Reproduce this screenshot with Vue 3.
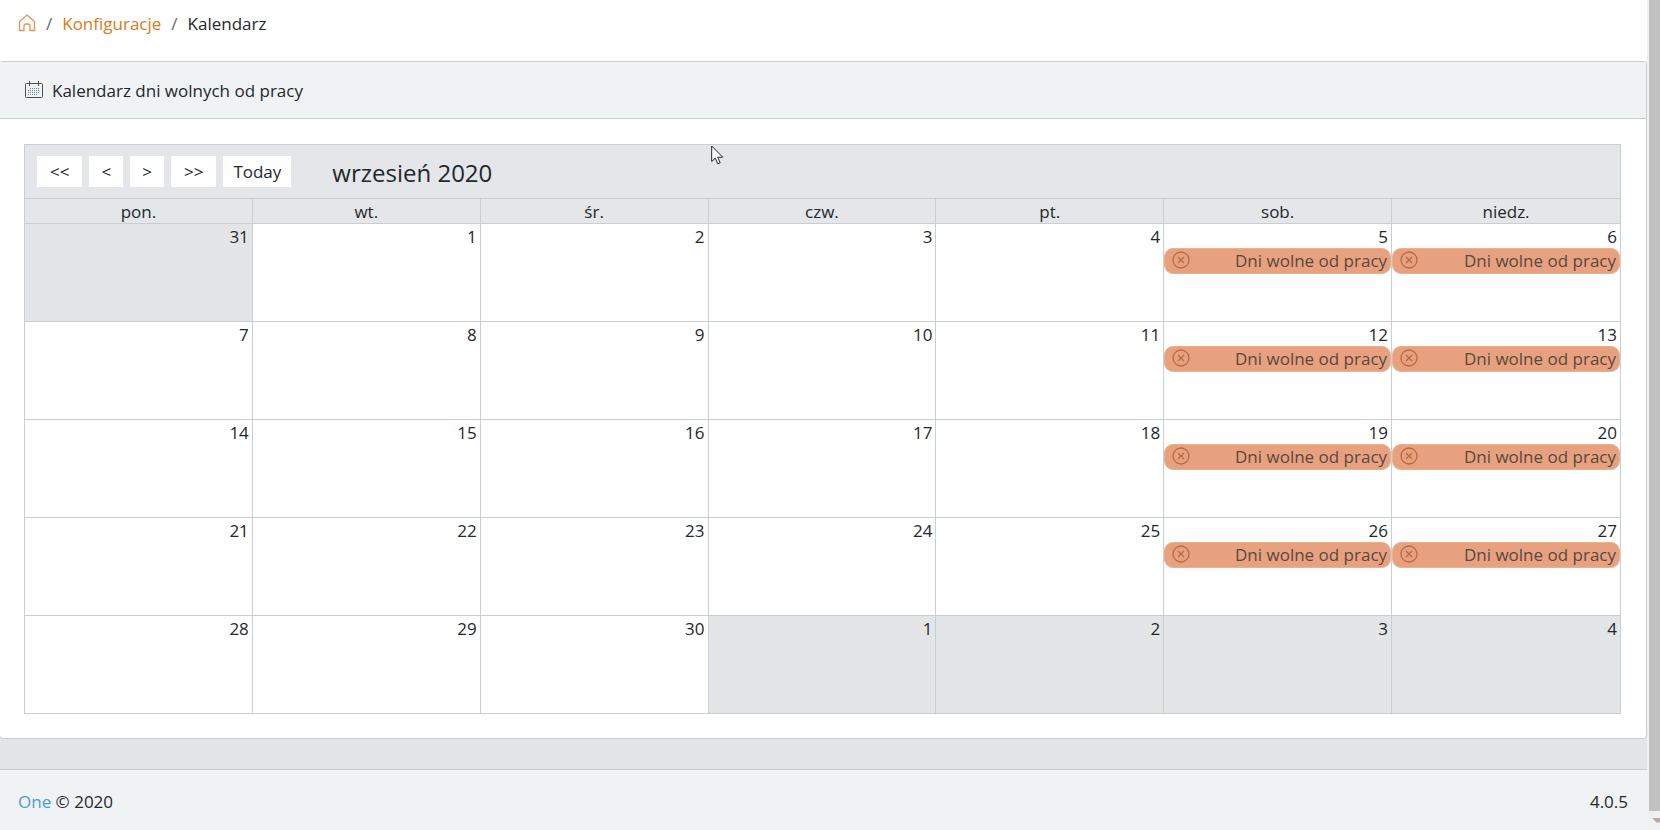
<template>
  <div class="layout">
    <div class="page">
      <nav class="breadcrumb" aria-label="breadcrumb">
        <a href="#" class="home" aria-label="Home">
          <svg viewBox="0 0 18 18" width="18" height="18">
            <path d="M1.500 7.500 9 1l7.500 6.500V16.500h-4.500V12a2 2 0 0 0-2-2H8a2 2 0 0 0-2 2v4.500H1.500z" />
          </svg>
        </a>
        <span class="separator">/</span>
        <a href="#">Konfiguracje</a>
        <span class="separator">/</span>
        <span>Kalendarz</span>
      </nav>

      <main class="card">
        <header class="card-header">
          <svg class="header-icon" viewBox="0 0 18 18" width="18" height="18">
            <path d="M1.500 2.500h15a1 1 0 0 1 1 1v12a1 1 0 0 1-1 1h-15a1 1 0 0 1-1-1v-12a1 1 0 0 1 1-1zM4.500 0v5M13.500 0v5" />
            <path class="dots" d="M5 7.500h10M3 9.500h12M3 11.500h12M3 13.500h10" />
          </svg>
          <span>Kalendarz dni wolnych od pracy</span>
        </header>

        <div class="card-body">
          <div class="calendar">
            <div class="toolbar">
              <button
                v-for="button in buttons"
                :key="button.text"
                type="button"
                :class="button.size"
              >
                {{ button.text }}
              </button>
              <h1>wrzesień 2020</h1>
            </div>
            <table>
              <thead>
                <tr>
                  <th v-for="day in weekDays" :key="day" scope="col">{{ day }}</th>
                </tr>
              </thead>
              <tbody>
                <tr v-for="(week, index) in weeks" :key="index">
                  <td v-for="day in week" :key="day.number" :class="{ outside: day.outside }">
                    <div class="day-number">{{ day.number }}</div>
                    <div v-if="day.free" class="event">
                      <button type="button" class="remove" aria-label="Usuń">
                        <svg viewBox="0 0 18 18" width="18" height="18">
                          <circle cx="9" cy="9" r="8" />
                          <path d="m6 6 6 6M12 6l-6 6" />
                        </svg>
                      </button>
                      <span>Dni wolne od pracy</span>
                    </div>
                  </td>
                </tr>
              </tbody>
            </table>
          </div>
        </div>
      </main>

      <footer class="footer">
        <span><a href="#">One</a> © 2020</span>
        <span>4.0.5</span>
      </footer>
    </div>

    <div class="scrollbar">
      <div class="thumb"></div>
      <svg class="arrow" viewBox="0 0 8 5" width="8" height="5">
        <path d="M0 0h8v4.500H4.500z" />
      </svg>
    </div>

    <svg class="cursor" viewBox="0 0 13 20" width="13" height="20">
      <path d="M.7 1v15.500l3.600-3.400 2.500 5.700 2.400-1-2.500-5.600h5z" />
    </svg>
  </div>
</template>

<script setup>
const buttons = [
  { text: '<<', size: 'wide' },
  { text: '<', size: 'narrow' },
  { text: '>', size: 'narrow' },
  { text: '>>', size: 'wide' },
  { text: 'Today', size: 'text' }
]
const weekDays = ['pon.', 'wt.', 'śr.', 'czw.', 'pt.', 'sob.', 'niedz.']

// the grid starts on monday, 31 august
const weeks = Array.from({ length: 5 }, (_, week) =>
  Array.from({ length: 7 }, (_, weekday) => {
    const date = new Date(2020, 7, 31 + week * 7 + weekday)
    const outside = date.getMonth() !== 8
    return {
      number: date.getDate(),
      outside,
      free: !outside && weekday > 4
    }
  })
)
</script>

<style>
body {
  margin: 0;
  background: #e4e5e6;
}
</style>

<style scoped>
.layout {
  position: relative;
  display: flex;
  min-height: 100vh;
  overflow: hidden;
  color: #23282c;
  font-family: "Open Sans", "Noto Sans", sans-serif;
  font-size: 17px;
  line-height: 24px;
}

.page {
  flex: 1;
  min-width: 0;
  display: flex;
  flex-direction: column;
}

.breadcrumb {
  display: flex;
  align-items: center;
  gap: 10px;
  padding: 12px 18px 25px;
  background: #fff;
}

.breadcrumb a {
  color: #db7a20;
  text-decoration: none;
}

.breadcrumb .home {
  display: flex;
  padding-bottom: 2px;
}

.home svg {
  fill: none;
  stroke: #e0935a;
  stroke-width: 1.3;
}

.separator {
  color: #5c6873;
}

.card {
  margin: 0 0 30px -1px;
  border: 1px solid #c8ced3;
  border-radius: 4px;
  background: #fff;
}

.card-header {
  display: flex;
  align-items: center;
  gap: 9px;
  padding: 17px 25px 15px;
  border-bottom: 1px solid #c8ced3;
  background: #eff3f4;
}

.header-icon {
  margin-bottom: 3px;
  fill: none;
  stroke: #4b4f53;
}

.header-icon .dots {
  stroke: #6b7f96;
  stroke-dasharray: 1 1;
}

.card-body {
  padding: 25px 25px 24px 24px;
}

.calendar {
  border: 1px solid #c8ced3;
}

.toolbar {
  display: flex;
  align-items: center;
  gap: 7px;
  padding: 11px 12px;
  background: #e4e6ea;
}

.toolbar button {
  padding: 4px 10px 3px;
  border: 0;
  background: #fff;
  color: inherit;
  font: inherit;
}

.toolbar .narrow {
  padding: 4px 12px 3px;
}

.toolbar .wide {
  padding: 4px 13px 3px;
}

h1 {
  margin: 0 0 0 34px;
  padding-top: 2px;
  font-size: 24px;
  font-weight: 400;
  line-height: 29px;
}

table {
  width: 100%;
  table-layout: fixed;
  border-collapse: separate;
  border-spacing: 0;
}

th,
td {
  padding: 0;
  border-top: 1px solid #c8ced3;
  border-right: 1px solid #c8ced3;
}

th:last-child,
td:last-child {
  border-right: 0;
}

th {
  padding-top: 2px;
  background: #e4e6ea;
  font-weight: 400;
  line-height: 22px;
}

td {
  height: 97px;
  vertical-align: top;
  text-align: right;
}

.outside {
  background: #e4e5e6;
}

.day-number {
  padding: 2px 3px 0;
  line-height: 22px;
}

.event {
  display: flex;
  align-items: center;
  justify-content: space-between;
  padding: 0 3px 0 7px;
  border: 1px solid #ebb18f;
  border-radius: 9px;
  background: #e8a17f;
  color: #5a4840;
}

.remove {
  display: flex;
  padding: 0 0 2px;
  border: 0;
  background: none;
}

.remove svg {
  fill: none;
  stroke: #b86b42;
  stroke-width: 1.3;
}

.footer {
  display: flex;
  flex: 1;
  justify-content: space-between;
  padding: 20px 19px 16px 18px;
  border-top: 1px solid #c8ced3;
  background: #eff3f4;
}

.footer a {
  color: #4a9bd8;
  text-decoration: none;
}

.scrollbar {
  display: flex;
  flex-direction: column;
  align-items: flex-end;
  width: 13px;
  background: #f1f1f1;
}

.thumb {
  flex: 1;
  width: 11px;
  background: #c1c1c1;
}

.arrow {
  margin: 7px 0;
  fill: #bbaaa2;
}

/* mouse pointer over the page */
.cursor {
  position: absolute;
  top: 145px;
  left: 711px;
  fill: #fff;
  stroke: #222;
}
</style>
